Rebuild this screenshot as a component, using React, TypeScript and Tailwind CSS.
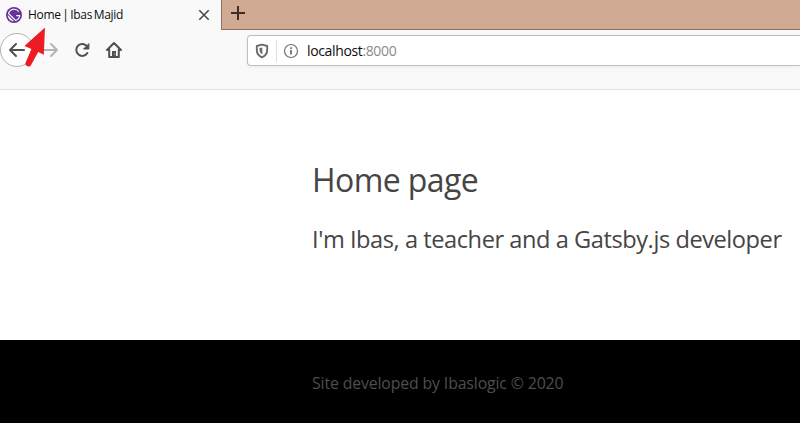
import React from "react";

function GatsbyIcon() {
  return (
    <svg width="16" height="16" viewBox="0 0 28 28" className="shrink-0">
      <circle cx="14" cy="14" r="14" fill="#663399" />
      <path
        fill="#fff"
        d="M6.2 21.8C4.1 19.7 3 16.9 3 14.2L13.9 25c-2.8-.1-5.6-1.1-7.7-3.2zm10.2 2.9L3.3 11.6C4.4 6.7 8.8 3 14 3c3.7 0 6.9 1.8 8.9 4.5l-1.5 1.3C19.7 6.5 17 5 14 5c-3.9 0-7.2 2.5-8.5 6L17 22.5c2.9-1 5.1-3.5 5.8-6.5H18v-2h7c0 5.2-3.7 9.6-8.6 10.7z"
      />
    </svg>
  );
}

function TabBar() {
  return (
    <header className="flex h-[30px]">
      <div className="flex w-[221px] shrink-0 items-center bg-[#f9f9f9] pl-1.5">
        <GatsbyIcon />
        <span className="ml-1.5 w-[170px] whitespace-nowrap text-[12px] leading-[30px] tracking-[-0.3px] [word-spacing:-1.2px] text-[#0c0c0d]">
          Home | Ibas Majid
        </span>
        <svg width="12" height="12" viewBox="0 0 12 12" stroke="#4a4a4c" strokeWidth="1.6">
          <path d="M1.3 1.3l9.4 9.4M10.7 1.3L1.3 10.7" />
        </svg>
      </div>
      <div className="flex flex-1 border-b border-l border-[#8e7060] bg-[#d1aa94] pl-[9px] pt-1.5">
        <svg width="14" height="14" viewBox="0 0 14 14" stroke="#392e2a" strokeWidth="2">
          <path d="M7 0v14M0 7h14" />
        </svg>
      </div>
    </header>
  );
}

function NavBar() {
  return (
    <nav className="relative flex h-[60px] items-start border-b border-[#e0e0e1] bg-[#f9f9fa]">
      <svg width="130" height="40" viewBox="0 30 130 40" fill="none" className="shrink-0">
        <circle cx="17" cy="50" r="16.5" fill="#fff" stroke="#b2b2b2" />
        <g strokeWidth="2" strokeLinecap="round" strokeLinejoin="round">
          <path d="M24 50H10M16 44l-6 6 6 6" stroke="#505052" />
          <path d="M43 50h14M51 44l6 6-6 6" stroke="#b4b4b6" />
          <path d="M87.2 46.5A6 6 0 1 0 87.4 53" stroke="#505052" />
          <path d="M88.9 44v5h-5z" fill="#505052" stroke="#505052" strokeWidth="1" />
          <path d="M107 50l7-7 7 7M109.2 49.5V57h9.6v-7.5" stroke="#505052" />
        </g>
        <path d="M112 51h4v6h-4z" fill="#505052" />
        <circle cx="114.8" cy="54" r=".6" fill="#fff" />
      </svg>
      <div className="ml-[117px] mt-[5px] flex h-[31px] flex-1 items-center rounded-l-sm border border-r-0 border-[#bebebe] bg-white shadow-[0_1px_4px_rgba(0,0,0,0.06)]">
        <svg width="14" height="16" viewBox="0 0 14 16" fill="none" className="ml-[7px] shrink-0">
          <path d="M7 1.7L12.2 3V7c0 3.6-2.1 6-5.2 7.3C3.9 13 1.8 10.6 1.8 7V3z" stroke="#6b6b6d" strokeWidth="1.9" strokeLinejoin="round" />
          <path d="M7.3 4.4v7C5.4 10.4 4.5 8.9 4.5 7V5z" fill="#6b6b6d" />
        </svg>
        <div className="ml-[7px] h-[22px] w-px bg-[#dedede]" />
        <svg width="16" height="16" viewBox="0 0 16 16" className="ml-1.5 shrink-0">
          <circle cx="8" cy="8" r="6.5" fill="none" stroke="#707072" strokeWidth="1.2" />
          <path d="M7.1 7h1.8v4.5H7.1zM7.1 4.2h1.8v1.7H7.1z" fill="#707072" />
        </svg>
        <span className="ml-2 whitespace-nowrap text-[14px] tracking-[-0.36px] text-[#0c0c0d]">
          localhost<span className="text-[#8b8b8c]">:8000</span>
        </span>
      </div>
      <svg width="26" height="42" viewBox="22 26 26 42" className="absolute left-[22px] -top-1">
        <path d="M45 27.5l-1.2 27.3-5.6-2.7-7.4 13.5c-1.3 2.2-6.5.2-5.2-2.8l5.8-13.7-7-3.2z" fill="#ed1c24" />
      </svg>
    </nav>
  );
}

export default function App() {
  return (
    <div className="flex h-[423px] w-[800px] flex-col overflow-hidden bg-white font-['Segoe_UI','Open_Sans',sans-serif]">
      <TabBar />
      <NavBar />
      <main className="h-[250px] pl-[312px] pt-[70px] text-[#454545]">
        <h1 className="whitespace-nowrap text-[32px] leading-10 tracking-[-0.6px]">Home page</h1>
        <p className="mt-[23px] whitespace-nowrap text-[23.6px] leading-8 tracking-[-0.44px]">
          I'm Ibas, a teacher and a Gatsby.js developer
        </p>
      </main>
      <footer className="flex-1 bg-black pl-[312px] pt-[31px] text-[#4e4e4e]">
        <p className="whitespace-nowrap text-[15.8px] leading-6 tracking-[-0.12px]">
          Site developed by Ibaslogic © 2020
        </p>
      </footer>
    </div>
  );
}
